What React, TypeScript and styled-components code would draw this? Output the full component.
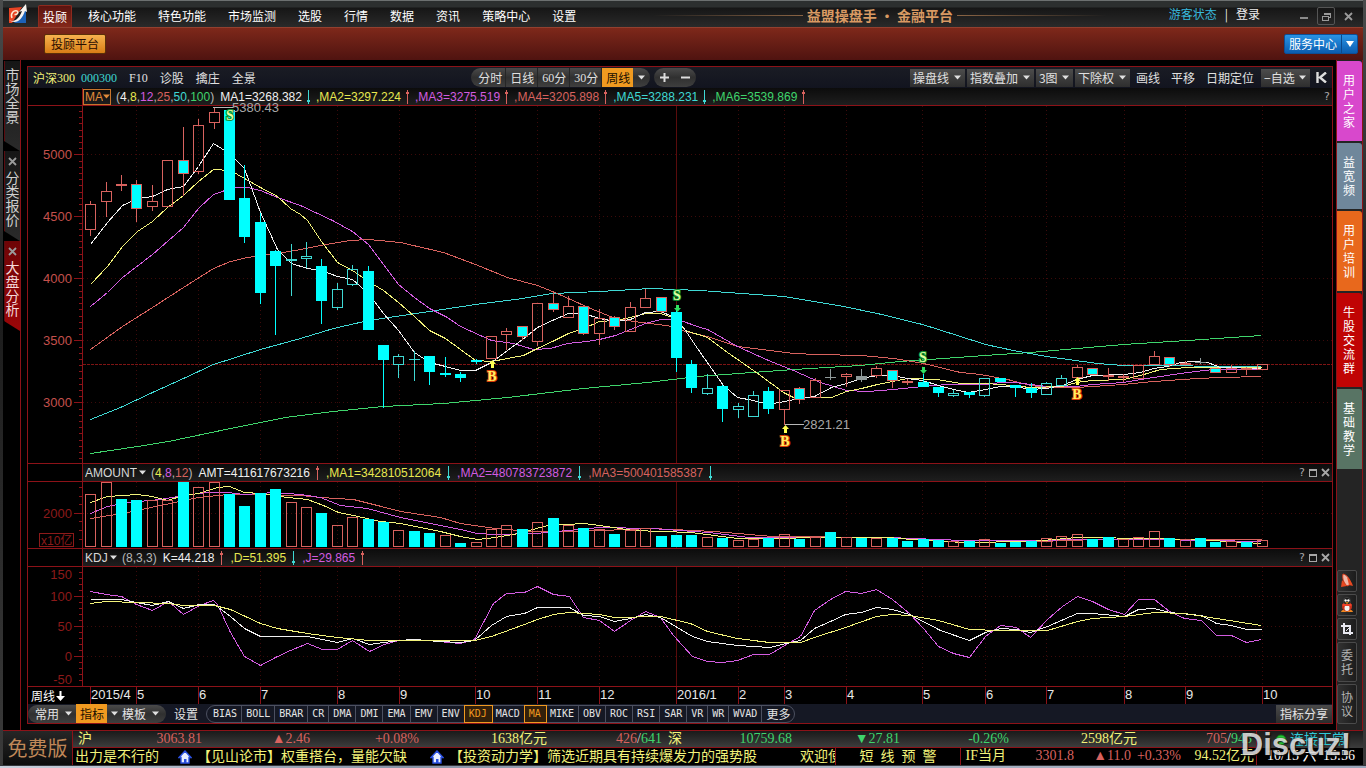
import React from 'react';
import styled, { createGlobalStyle, css } from 'styled-components';

const HAN = '"Noto Sans CJK SC", sans-serif';
const SANS = '"Liberation Sans", "Noto Sans CJK SC", sans-serif';
const SERIF = '"Liberation Serif", "Noto Sans CJK SC", serif';
const MONO = '"DejaVu Sans Mono", "Noto Sans CJK SC", monospace';

const c = {
  line: '#8c1218',
  dimLine: '#5a0c10',
  white: '#f0f0f0',
  text: '#d8d8d8',
  yellow: '#f2f27a',
  readout: '#e8e850',
  magenta: '#d35ce0',
  red: '#d8625e',
  cyan: '#3fd9d4',
  green: '#3fd46c',
  orange: '#f09a20',
  solid: '#00ffff',
};

const GlobalStyle = createGlobalStyle`
  *, *::before, *::after { box-sizing: border-box; }
  body { margin: 0; background: #000; color: ${c.text}; font: 12px/16px ${HAN}; }
  button, select { margin: 0; padding: 0; border: 0; background: none; color: inherit; font: inherit; cursor: pointer; }
  a { color: inherit; text-decoration: none; }
  svg { display: block; flex: none; }
`;

/* ---------- frame ---------- */

const Frame = styled.div`
  min-height: 100vh;
  display: flex;
  flex-direction: column;
  border: solid #4a4c4c;
  border-width: 0 3px;
  border-image: linear-gradient(#4a4c4c, #1c1c1c 40%, #3a3a3a) 1;
  background: #000;
`;

const TitleBar = styled.header`
  height: 27px;
  display: flex;
  align-items: flex-end;
  padding: 0 6px 0 5px;
  border-top: 1px solid #6c7070;
  background: linear-gradient(#2c2f2f 0 6px, #161616 7px, #2a2a2a);
`;

const Logo = styled.svg`
  align-self: center;
  margin-right: 10px;
`;

const Nav = styled.nav`
  display: flex;
  gap: 22px;
  line-height: 22px;
  color: #fff;
`;

const NavLink = styled.a<{ $active?: boolean }>`
  ${p => p.$active && css`
    padding: 0 4px;
    margin-right: -6px;
    border: solid #8e2a1e;
    border-width: 1px 1px 0;
    border-radius: 2px 2px 0 0;
    line-height: 21px;
    background: linear-gradient(#5a1410, #84281a);
  `}
`;

const Brand = styled.div`
  flex: 1;
  min-width: 0;
  display: flex;
  align-items: center;
  justify-content: center;
  gap: 4px;
  height: 24px;
  padding-left: 15px;
  font-weight: 700;
  font-size: 14px;
  color: #d99a63;
  white-space: nowrap;
`;

const BrandLine = styled.span<{ $flip?: boolean }>`
  width: 150px;
  height: 1px;
  background: linear-gradient(to ${p => (p.$flip ? 'left' : 'right')}, transparent, #8a6444);
`;

const Account = styled.div`
  display: flex;
  align-items: center;
  gap: 8px;
  align-self: center;
  padding-right: 35px;
  color: #eee;
`;

const GuestLink = styled.a`
  color: #38b8dc;
`;

const WindowButtons = styled.div`
  display: flex;
  gap: 4px;
  align-self: center;
  margin-top: 4px;
`;

const WindowButton = styled.button<{ $boxed?: boolean }>`
  width: 18px;
  height: 18px;
  display: grid;
  place-items: center;
  border: 1px solid ${p => (p.$boxed ? '#555' : 'transparent')};
  border-radius: 2px;
`;

const Ribbon = styled.div`
  height: 33px;
  display: flex;
  justify-content: space-between;
  align-items: flex-start;
  padding: 6px 5px 0 41px;
  border-top: 1px solid #93402f;
  background: linear-gradient(#7e281a, #4f1310);
`;

const RibbonButton = styled.button`
  height: 20px;
  padding: 0 6px;
  border: 1px solid #5c3008;
  border-radius: 2px;
  line-height: 18px;
  color: #2a0d00;
  background: linear-gradient(#f6b24e, #d97e16);
`;

const ServiceButton = styled.button`
  height: 20px;
  display: flex;
  align-items: center;
  border: 1px solid #0d4f96;
  border-radius: 2px;
  padding-left: 4px;
  color: #fff;
  background: linear-gradient(#2a93e4, #0a5db0);
`;

const ServiceArrow = styled.span`
  display: grid;
  place-items: center;
  width: 16px;
  height: 18px;
  margin-left: 4px;
  border-left: 1px solid #0c4a8c;
`;

const Body = styled.div`
  flex: 1;
  display: flex;
  align-items: stretch;
`;

/* ---------- left tabs ---------- */

const LeftRail = styled.nav`
  width: 18px;
  flex: none;
  padding-top: 1px;
  border-right: 1px solid ${c.line};
  border-left: 1px solid #000;
`;

const LeftTab = styled.div<{ $active?: boolean }>`
  height: 90px;
  display: flex;
  flex-direction: column;
  align-items: center;
  padding-top: 6px;
  clip-path: polygon(0 0, 100% 0, 100% 100%, 0 80px);
  border-left: 1px solid ${c.dimLine};
  background: ${p => (p.$active ? 'linear-gradient(#6e0406, #9c0608)' : 'linear-gradient(#161616, #2a2a2a)')};
  color: ${p => (p.$active ? '#f4dada' : '#d0d0d0')};
`;

const LeftTabLink = styled.a`
  width: 14px;
  font-size: 14px;
  line-height: 14px;
  word-break: break-all;
`;

const CloseButton = styled.button`
  display: flex;
  height: 13px;
`;

/* ---------- right rail ---------- */

const RightRail = styled.aside`
  width: 27px;
  flex: none;
  margin-left: 3px;
  padding: 1px 0 6px;
  display: flex;
  flex-direction: column;
  gap: 2px;
  border: solid ${c.line};
  border-width: 0 1px;
  background: #242424;
`;

const RightTab = styled.a<{ $color: string }>`
  padding: 12px 7px 12px 6px;
  line-height: 14px;
  word-break: break-all;
  border-radius: 0 3px 0 0;
  color: #fff;
  background: ${p => p.$color};
`;

const RailTools = styled.div`
  margin-top: auto;
  display: flex;
  flex-direction: column;
  gap: 2px;
  padding-right: 5px;
`;

const RailTool = styled.button<{ $text?: boolean }>`
  min-height: 22px;
  padding: ${p => (p.$text ? '5px 3px' : '2px')};
  line-height: 14px;
  word-break: break-all;
  color: #b4b4b4;
  border: 1px solid #4a4a4a;
  border-radius: 2px;
  background: linear-gradient(to right, #323232, #1c1c1c);
`;

/* ---------- main panel ---------- */

const Panel = styled.main`
  flex: 1;
  min-width: 0;
  margin: 6px 0 6px 6px;
  border: 1px solid ${c.line};
`;

const TopBar = styled.div`
  height: 21px;
  display: flex;
  align-items: center;
  padding: 0 0 0 5px;
  background: linear-gradient(#1a1c24, #12141f);
  color: #e0e0e0;
`;

const StockLinks = styled.div`
  display: flex;
  gap: 12px;
  flex: 437 1 0;
`;

const StockName = styled.a<{ $color?: string; $tight?: boolean }>`
  display: inline-flex;
  align-items: center;
  color: ${p => p.$color || 'inherit'};
  margin-right: ${p => (p.$tight ? '-6px' : '0')};
`;

const Code = styled.span`
  font: 12px/16px ${SERIF};
`;

const Pill = styled.div`
  display: flex;
  align-items: center;
  height: 19px;
  padding: 0 3px;
  border-radius: 10px;
  background: linear-gradient(#4a4a4a, #303030 50%, #3e3e3e);
`;

const PillButton = styled.button<{ $active?: boolean }>`
  height: 19px;
  padding: 0 3px 0 4px;
  display: flex;
  align-items: center;
  border-right: ${p => (p.$active ? '0' : '1px solid #262626')};
  ${p => p.$active && css`
    color: #201000;
    background: ${c.orange};
  `}
`;

const ArrowButton = styled.button`
  height: 19px;
  padding: 0 2px 0 5px;
`;

const ZoomPill = styled(Pill)`
  gap: 12px;
  margin-left: 4px;
  padding: 0 6px;
`;

const ToolGroup = styled.div`
  flex: 634 1 0;
  display: flex;
  justify-content: flex-end;
  align-items: center;
  gap: 2px;
`;

const DropLabel = styled.label<{ $kind: 'box' | 'plain' | 'outline' | 'pill' }>`
  display: inline-flex;
  align-items: center;
  ${p => p.$kind === 'box' && css`
    height: 18px;
    gap: 4px;
    padding: 0 4px 0 3px;
    background: linear-gradient(#4c4c4c, #2e2e2e);
  `}
  ${p => p.$kind === 'outline' && css`
    height: 16px;
    padding-left: 1px;
    border: 1px solid #c8742c;
    color: #e08a3a;
  `}
  ${p => p.$kind === 'plain' && css`
    gap: 2px;
    margin-left: 2px;
  `}
  ${p => p.$kind === 'pill' && css`
    gap: 5px;
  `}
`;

const DropSelect = styled.select`
  appearance: none;
  outline: 0;
  line-height: 16px;
`;

const TextButton = styled.button`
  padding: 0 4px;
  margin-right: 1px;
`;

const HeadRow = styled.div<{ $top?: boolean }>`
  display: grid;
  grid-template-columns: minmax(0, 54fr) minmax(0, 1250fr);
  border-bottom: 1px solid ${c.line};
  border-top: ${p => (p.$top ? `1px solid ${c.line}` : '0')};
`;

const Head = styled.div`
  grid-column: 2;
  height: 17px;
  display: flex;
  align-items: center;
  padding-right: 2px;
  border-left: 1px solid ${c.line};
  font-family: ${SANS};
  white-space: pre;
  background: linear-gradient(#0c0c0c, #1e1e1e);
`;

const Params = styled.span`
  margin: 0 6px 0 5px;
  color: #b8b8b8;
`;

const Reading = styled.span<{ $color: string; $wide?: boolean }>`
  display: inline-flex;
  align-items: center;
  gap: ${p => (p.$wide ? '6px' : '5px')};
  margin-right: ${p => (p.$wide ? '7px' : '6px')};
  color: ${p => p.$color};
`;

const Tint = styled.span<{ $color: string }>`
  color: ${p => p.$color};
`;

const HeadButtons = styled.div`
  margin-left: auto;
  display: flex;
  align-items: center;
  gap: 4px;
  color: #a8a8a8;
  font: 11px/16px ${MONO};
`;

const Chart = styled.svg`
  width: 100%;
  height: auto;
  overflow: visible;
  font-family: "Liberation Sans", sans-serif;
  font-size: 13px;
`;

const UnitText = styled.text`
  font: 12px ${SANS};
`;

const DateRow = styled.div`
  display: grid;
  grid-template-columns: minmax(0, 54fr) minmax(0, 1250fr);
  border-top: 1px solid ${c.line};
`;

const CycleButton = styled.button`
  display: flex;
  align-items: center;
  gap: 1px;
  padding-left: 3px;
  line-height: 17px;
  color: #fff;
`;

const IndicatorBar = styled.div`
  height: 19px;
  display: flex;
  align-items: center;
  color: #e4e4e4;
  background: #151824;
`;

const IndicatorPill = styled(Pill)`
  height: 18px;
  padding: 0 7px;
  gap: 4px;
`;

const SettingsButton = styled.button`
  padding: 0 8px;
`;

const IndicatorList = styled.div`
  display: flex;
  height: 18px;
  padding-left: 2px;
  border: 1px solid #4c5060;
  border-radius: 10px;
`;

const IndicatorButton = styled.button<{ $on?: boolean; $last?: boolean }>`
  padding: 0 4px;
  font: 10px/16px ${MONO};
  border-right: ${p => (p.$last ? '0' : '1px solid #4c5060')};
  ${p => p.$last && css`
    font: 12px/16px ${HAN};
  `}
  ${p => p.$on && css`
    color: ${c.orange};
    border-right-color: transparent;
    outline: 1px solid ${c.orange};
    background: #33200a;
  `}
`;

const ShareButton = styled.button`
  margin-left: auto;
  height: 18px;
  padding: 0 4px;
  line-height: 18px;
  background: linear-gradient(#4a4a4a, #2c2c2c);
`;

/* ---------- status bar ---------- */

const StatusBar = styled.footer`
  position: relative;
  display: grid;
  grid-template-columns: 70px minmax(0, 1fr) 107px;
  height: 35px;
  border-top: 1px solid ${c.line};
  font: 14px/16px ${SERIF};
  white-space: nowrap;
`;

const Edition = styled.div`
  display: grid;
  place-items: center;
  border-right: 1px solid ${c.line};
  font: 20px/30px ${HAN};
  color: #c08858;
  background: linear-gradient(#262626, #0c0c0c);
`;

const StatusRow = styled.div<{ $upper?: boolean }>`
  display: flex;
  height: 17px;
  ${p => p.$upper && css`
    gap: 5px;
    padding: 0 4px;
    border-bottom: 1px solid ${c.line};
    background: linear-gradient(#1a1a1a, #3c3c3c);
  `}
`;

const Quote = styled.div`
  flex: 1;
  min-width: 0;
  display: grid;
  grid-template-columns: 15fr 110fr 108fr 109fr 128fr 115fr;
  text-align: right;
`;

const Ticker = styled.div`
  flex: 1;
  min-width: 0;
  overflow: hidden;
  display: flex;
  align-items: center;
  margin-left: 2px;
  color: ${c.yellow};
`;

const News = styled.a<{ $first?: boolean }>`
  flex: none;
  margin: ${p => (p.$first ? '0 19px 0 0' : '0 23px 0 5px')};
`;

const Greeting = styled.span`
  flex: none;
  margin-left: 20px;
`;

const AlertButton = styled.button`
  width: 126px;
  border: solid ${c.line};
  border-width: 0 1px;
  color: ${c.yellow};
  white-space: pre;
`;

const Futures = styled.div`
  width: 295px;
  display: grid;
  grid-template-columns: 41fr 68fr 57fr 50fr 73fr;
  text-align: right;
  padding: 0 2px 0 4px;
`;

const StatusSide = styled.div`
  border-left: 1px solid ${c.line};
  color: #fff;
`;

const Connection = styled.div`
  height: 17px;
  display: flex;
  align-items: center;
  justify-content: flex-end;
  gap: 3px;
  padding-right: 17px;
  color: #30c8d8;
  background: linear-gradient(#1a1a1a, #3c3c3c);
`;

const Clock = styled.div`
  display: flex;
  justify-content: space-between;
  padding: 0 8px 0 10px;
`;

const Mark = styled.div`
  position: absolute;
  right: 12px;
  top: 0;
  font: 700 31px/28px ${SANS};
  color: #d8d8d8;
  text-shadow: 0 0 2px #222, 1px 1px 1px #000;
  opacity: 0.9;
`;

const Edge = styled.div`
  height: 3px;
  margin: 0 -3px;
  border-top: 1px solid #33363a;
  background: linear-gradient(to right, #c8d0dc, #8894a8 30%, #aab4c4 60%, #98a4b8);
`;

/* ---------- small drawings ---------- */

const Caret = ({ color = '#e0e0e0' }: { color?: string }) => (
  <svg width="7" height="5" viewBox="0 0 7 5" aria-hidden="true">
    <path d="M0 0.5H7L3.5 4.5Z" fill={color} />
  </svg>
);

const Trend = ({ up }: { up?: boolean }) => (
  <svg width="3" height="14" viewBox="0 0 3 14" shapeRendering="crispEdges" aria-hidden="true">
    {up
      ? <path d="M1 0H2V14H1ZM0 2H3V4H0Z" fill={c.red} />
      : <path d="M1 0H2V14H1ZM0 10H3V12H0Z" fill={c.cyan} />}
  </svg>
);

const Cross = ({ size = 9, color = '#9a9a9a' }: { size?: number; color?: string }) => (
  <svg width={size} height={size} viewBox="0 0 9 9" aria-hidden="true">
    <path d="M1 1L8 8M8 1L1 8" stroke={color} strokeWidth="1.8" fill="none" />
  </svg>
);

const House = () => (
  <svg width="14" height="14" viewBox="0 0 14 14" aria-hidden="true">
    <path d="M7 1L1 7.5H3V13H11V7.5H13Z" fill="#e8eeff" stroke="#2a50e0" strokeWidth="1.4" />
    <path d="M6 9H8.5V13H6Z" fill="#2a50e0" />
  </svg>
);

type DropProps = { name: string; value: string; kind: 'box' | 'plain' | 'outline' | 'pill'; caret?: string };

const Drop = ({ name, value, kind, caret }: DropProps) => (
  <DropLabel $kind={kind}>
    <DropSelect aria-label={name} defaultValue={value}>
      <option>{value}</option>
    </DropSelect>
    <Caret color={caret} />
  </DropLabel>
);

const PaneButtons = ({ full }: { full?: boolean }) => (
  <HeadButtons>
    <button aria-label="帮助">?</button>
    {full && (
      <>
        <button aria-label="最大化">
          <svg width="8" height="8" viewBox="0 0 8 8" shapeRendering="crispEdges">
            <path d="M0.5 1V7.5H7.5V1Z" fill="none" stroke="#a8a8a8" />
            <path d="M0 0H8V2H0Z" fill="#a8a8a8" />
          </svg>
        </button>
        <button aria-label="关闭"><Cross color="#a8a8a8" /></button>
      </>
    )}
  </HeadButtons>
);

/* ---------- chart data ---------- */

const slot = (i: number) => Math.round(90.2 + 15.415 * i);

// kind, body top, body bottom, high, low
// r hollow rising, c filled falling, h hollow falling, m framed falling, g flat
type Candle = [string, number, number, number, number];
const candles: Candle[] = [
  ['r', 204, 230, 201, 236], ['r', 191, 202, 182, 217], ['r', 184, 186, 175, 191], ['m', 184, 209, 180, 222],
  ['r', 201, 207, 185, 211], ['r', 160, 207, 160, 207], ['m', 160, 174, 127, 196], ['r', 125, 172, 119, 174],
  ['r', 112, 123, 107, 129], ['c', 110, 200, 110, 200], ['c', 198, 237, 165, 243], ['c', 222, 293, 213, 304],
  ['c', 251, 266, 250, 335], ['h', 259, 261, 244, 296], ['h', 256, 259, 242, 268], ['c', 266, 301, 259, 324],
  ['h', 289, 308, 283, 310], ['h', 269, 285, 265, 286], ['c', 271, 330, 266, 330], ['c', 345, 360, 345, 408],
  ['h', 356, 365, 354, 378], ['h', 359, 360, 351, 381], ['c', 356, 372, 356, 385], ['c', 373, 375, 357, 377],
  ['c', 374, 378, 372, 382], ['c', 360, 362, 359, 364], ['r', 336, 359, 336, 359], ['r', 331, 335, 328, 350],
  ['m', 326, 337, 326, 340], ['r', 303, 342, 303, 346], ['m', 303, 310, 291, 312], ['r', 306, 318, 296, 318],
  ['m', 306, 334, 305, 335], ['r', 318, 334, 309, 345], ['m', 317, 327, 316, 330], ['r', 307, 332, 302, 332],
  ['r', 298, 308, 289, 308], ['m', 297, 312, 297, 313], ['c', 312, 358, 310, 372], ['c', 364, 388, 360, 393],
  ['h', 388, 394, 374, 395], ['c', 386, 409, 385, 422], ['h', 406, 410, 403, 418], ['h', 395, 417, 391, 417],
  ['c', 391, 409, 387, 414], ['r', 390, 410, 390, 425], ['m', 388, 400, 387, 404], ['r', 380, 398, 378, 398],
  ['g', 377, 378, 369, 380], ['r', 374, 377, 373, 387], ['g', 376, 380, 369, 382], ['r', 368, 376, 366, 378],
  ['m', 370, 381, 370, 388], ['r', 381, 383, 379, 385], ['c', 382, 387, 374, 387], ['c', 387, 393, 387, 397],
  ['h', 393, 396, 390, 397], ['c', 392, 395, 392, 398], ['h', 378, 396, 378, 397], ['c', 378, 382, 378, 382],
  ['c', 385, 388, 385, 397], ['c', 388, 393, 383, 398], ['h', 383, 395, 382, 395], ['h', 378, 386, 375, 386],
  ['r', 367, 378, 365, 378], ['m', 368, 375, 368, 375], ['r', 375, 377, 368, 381], ['r', 376, 378, 374, 382],
  ['r', 365, 379, 365, 379], ['r', 356, 365, 351, 365], ['m', 357, 365, 357, 367], ['r', 363, 365, 361, 365],
  ['g', 362, 363, 358, 364], ['m', 368, 373, 368, 373], ['r', 368, 373, 365, 373], ['r', 368, 370, 367, 375],
  ['r', 364, 370, 364, 370],
];

const volumes: [string, number][] = [
  ['r', 494], ['r', 482], ['c', 499], ['c', 500], ['r', 500], ['r', 500], ['c', 482], ['r', 487], ['r', 482], ['c', 494],
  ['c', 506], ['c', 493], ['c', 489], ['r', 502], ['r', 507], ['c', 513], ['r', 525], ['r', 517], ['c', 519], ['c', 522],
  ['r', 530], ['c', 531], ['c', 533], ['r', 535], ['c', 543], ['r', 542], ['r', 529], ['r', 525], ['c', 529], ['r', 522],
  ['c', 518], ['r', 525], ['c', 528], ['r', 529], ['c', 534], ['r', 530], ['r', 528], ['c', 536], ['c', 535], ['c', 535],
  ['r', 537], ['c', 538], ['r', 540], ['r', 539], ['c', 538], ['r', 534], ['c', 539], ['r', 537], ['c', 532], ['r', 537],
  ['c', 538], ['r', 538], ['c', 538], ['c', 541], ['c', 539], ['c', 540], ['r', 541], ['c', 541], ['r', 539], ['c', 543],
  ['c', 542], ['c', 541], ['r', 538], ['r', 536], ['r', 534], ['c', 539], ['c', 537], ['r', 539], ['r', 537], ['r', 531],
  ['c', 538], ['r', 539], ['c', 538], ['c', 542], ['r', 541], ['c', 542], ['r', 540],
];

const priceLines: [string, string][] = [
  [c.green, '90,453 137,446 168,441 230,428 285,417 300,415 333,411 383,406 443,403 507,397 583,388 647,382 697,376 793,369 860,365 900,361 943,358 999,354 1030,352 1123,344 1187,340 1261,335'],
  [c.cyan, '90,419 120,407 152,392 183,378 213,364 260,349 300,338 333,328 368,320 429,311 475,304 522,298 552,293 599,291 633,289 650,288 700,290 783,296 843,306 877,313 922,324 957,335 985,344 1013,350 1046,356 1097,363 1123,365 1261,366'],
  [c.red, '90,349 122,326 152,307 183,287 213,268 230,261 247,257 277,253 300,249 325,244 350,240 368,239 400,242 443,252 475,264 507,277 537,285 552,291 568,298 590,308 615,318 633,321 650,323 672,326 685,331 707,336 737,346 793,353 817,354 861,355 893,358 923,363 960,372 980,374 1007,379 1030,385 1046,387 1076,387 1123,384 1153,381 1197,378 1220,377 1261,376'],
  [c.magenta, '90,306 107,292 122,277 152,254 183,227 198,208 213,194 233,187 247,187 260,190 277,197 300,205 332,220 352,231 368,244 383,264 398,284 414,297 429,308 447,317 460,326 491,340 513,343 533,349 550,348 567,343 587,341 599,339 615,335 630,329 645,323 660,319 677,319 700,327 707,329 737,346 768,360 793,370 820,382 846,390 867,391 893,389 922,386 947,384 985,384 1000,382 1015,382 1030,384 1046,386 1076,386 1092,384 1123,382 1153,377 1187,372 1213,369 1261,369'],
  [c.yellow, '90,284 107,266 122,246 137,231 152,221 167,207 183,195 198,181 213,169 230,170 244,178 260,187 277,196 290,208 300,214 307,220 321,241 337,262 352,270 368,281 383,290 398,302 414,316 429,330 445,338 460,349 475,360 491,361 507,358 523,355 537,348 552,341 568,333 583,328 599,321 615,320 630,317 645,313 660,313 672,317 685,330 707,337 727,352 743,363 760,375 783,392 793,397 814,397 831,397 846,391 861,388 877,384 892,381 907,378 937,379 960,383 985,383 1000,384 1030,387 1062,386 1076,382 1092,380 1123,379 1140,375 1160,369 1187,367 1261,367'],
  [c.white, '90,244 107,222 122,205 137,198 152,196 167,189 183,186 198,166 213,143 229,153 244,168 260,212 277,249 291,263 307,268 321,270 337,276 352,279 368,293 383,313 398,330 414,352 429,362 445,366 460,370 475,370 491,362 507,350 522,339 537,327 552,320 568,313 583,313 599,318 615,321 630,319 645,312 660,311 672,316 683,327 697,348 723,385 737,397 753,400 768,404 784,401 800,398 814,396 831,387 846,383 861,378 877,375 892,375 907,378 922,380 938,385 953,389 968,392 985,389 1000,386 1015,386 1030,389 1046,388 1062,385 1076,379 1092,375 1123,374 1140,372 1153,368 1167,366 1180,362 1193,361 1207,362 1220,367 1261,368'],
];

const volumeLines: [string, string][] = [
  [c.red, '90,518 122,513 160,505 198,497 227,494 260,494 300,495 320,497 353,499 377,505 400,511 440,517 460,523 495,528 529,531 576,531 651,528 714,531 772,536 888,537 963,540 1038,541 1096,539 1261,539'],
  [c.magenta, '90,513 107,506 127,502 160,499 183,495 207,492 227,492 244,494 260,493 273,492 300,494 320,497 340,505 367,508 400,517 440,525 460,529 477,533 495,534 535,533 599,527 651,528 708,532 749,537 888,537 963,540 1038,540 1077,539 1153,539 1261,541'],
  [c.yellow, '90,502 107,496 137,494 152,496 167,500 183,495 198,493 217,487 229,486 244,492 260,493 287,497 307,499 323,505 338,512 353,515 380,521 400,523 440,531 460,536 477,539 495,537 518,533 547,525 584,523 599,525 633,530 691,532 737,538 768,538 824,537 888,537 911,539 963,542 1030,541 1077,537 1153,538 1211,540 1261,543'],
];

const kdjLines: [string, string][] = [
  [c.magenta, '90,591 106,594 121,596 136,604 152,610 168,601 183,614 199,605 213,600 217,604 230,632 244,656 260,665 275,657 290,650 307,643 322,649 337,649 352,640 369,651 384,644 398,640 414,639 438,641 460,643 474,639 484,620 493,603 506,593 524,592 537,586 553,594 569,596 583,617 599,620 614,631 630,620 645,611 660,617 673,635 692,656 707,661 722,662 737,660 753,654 769,654 786,644 800,636 814,610 830,599 845,591 861,593 876,589 892,599 909,613 923,628 938,646 953,653 969,657 985,636 1000,625 1016,627 1030,637 1047,619 1062,606 1077,596 1092,601 1108,609 1124,614 1138,599 1154,599 1169,611 1184,618 1201,620 1216,635 1231,635 1246,642 1261,639'],
  [c.white, '90,599 121,599 136,602 152,605 168,601 183,608 199,604 214,604 230,616 244,628 260,636 307,636 322,639 337,642 352,638 369,644 398,640 414,639 438,641 460,642 474,640 491,625 506,616 524,613 537,607 569,607 583,615 599,616 614,621 630,618 645,614 660,617 692,636 707,641 737,645 769,647 786,643 800,640 814,628 830,621 845,614 861,612 876,607 892,609 909,614 940,630 969,640 985,632 1000,628 1016,629 1030,632 1047,626 1077,613 1092,613 1124,616 1138,609 1154,608 1169,612 1201,615 1216,623 1231,625 1246,629 1261,629'],
  [c.yellow, '90,603 106,601 168,603 183,605 214,605 230,609 260,623 277,628 307,633 337,637 369,640 438,640 474,640 491,636 524,624 537,619 553,614 569,612 599,614 614,617 660,616 690,623 707,631 737,638 769,642 800,642 814,637 845,627 876,616 892,614 909,615 938,620 969,629 1000,630 1047,630 1077,621 1092,618 1124,616 1154,612 1184,613 1216,618 1261,625'],
];

const months: [number, string][] = [
  [90, '2015/4'], [136, '5'], [198, '6'], [260, '7'], [337, '8'], [399, '9'], [475, '10'], [537, '11'], [599, '12'],
  [676, '2016/1'], [738, '2'], [784, '3'], [846, '4'], [922, '5'], [985, '6'], [1046, '7'], [1124, '8'], [1185, '9'], [1262, '10'],
];

/* ---------- chart parts ---------- */

const Grid = ({ top, bottom, rows }: { top: number; bottom: number; rows: number[] }) => (
  <g stroke="#3c0a0a" strokeDasharray="1 3">
    {rows.map(y => <path key={y} d={`M83 ${y + 0.5}H1332`} />)}
    {months.filter(m => m[0] > 90).map(([x]) => (
      <path key={x} d={`M${x + 0.5} ${top}V${bottom}`} {...(x === 676 ? { stroke: '#5a0c0c', strokeDasharray: 'none' } : {})} />
    ))}
  </g>
);

const Axis = ({ top, bottom, first, step, color, labels }: {
  top: number; bottom: number; first: number; step: number; color: string; labels: [number, string, boolean][];
}) => {
  const ticks: number[] = [];
  for (let y = first; y < bottom - 2; y += step) ticks.push(Math.round(y));
  return (
    <>
      <g stroke={c.line}>
        <path d={`M82.5 ${top}V${bottom}`} />
        {ticks.map(y => <path key={y} d={`M79 ${y + 0.5}H82`} />)}
        {labels.filter(l => l[2]).map(([y]) => <path key={y} d={`M74 ${y + 0.5}H82`} />)}
      </g>
      <g fill={color} textAnchor="end">
        {labels.map(([y, t]) => <text key={t} x="72" y={y + 5}>{t}</text>)}
      </g>
    </>
  );
};

const Lines = ({ data }: { data: [string, string][] }) => (
  <g fill="none">
    {data.map(([color, points]) => <polyline key={color} points={points} stroke={color} transform="translate(0.5 0.5)" />)}
  </g>
);

const CandleMark = ({ i, data }: { i: number; data: Candle }) => {
  const [kind, top, bottom, high, low] = data;
  const x = slot(i);
  const stroke = kind === 'c' ? c.solid : kind === 'h' ? c.cyan : kind === 'g' ? '#8f9a9a' : c.red;
  const fill = kind === 'c' || kind === 'm' ? c.solid : kind === 'g' ? '#8f9a9a' : 'none';
  return (
    <g stroke={stroke}>
      <path d={`M${x + 0.5} ${high}V${top}M${x + 0.5} ${bottom}V${low}`} />
      {bottom - top < 2
        ? <path d={`M${x - 5} ${top + 0.5}H${x + 6}`} />
        : <rect x={x - 4.5} y={top + 0.5} width="10" height={bottom - top - 1} fill={fill} />}
    </g>
  );
};

const Signal = ({ x, y, arrow, type }: { x: number; y: number; arrow?: number; type: 'S' | 'B' }) => {
  const sell = type === 'S';
  return (
    <>
      <text
        x={x} y={y + 5} textAnchor="middle" fontFamily="Liberation Serif" fontWeight="700" fontSize="14"
        fill={sell ? '#dfffa0' : '#ffee60'} stroke={sell ? '#109030' : '#d83c08'} strokeWidth="2" paintOrder="stroke"
      >{type}</text>
      {arrow && (sell
        ? <path d={`M${x - 1} ${arrow - 3}H${x + 2}V${arrow}H${x + 4}L${x + 0.5} ${arrow + 4}L${x - 3} ${arrow}H${x - 1}Z`} fill="#30e060" />
        : <path d={`M${x - 1} ${arrow + 4}H${x + 2}V${arrow}H${x + 4}L${x + 0.5} ${arrow - 4}L${x - 3} ${arrow}H${x - 1}Z`} fill="#ffff50" />)}
    </>
  );
};

const PriceChart = () => (
  <Chart viewBox="28 106 1304 357" role="img" aria-label="沪深300 周线">
    <g shapeRendering="crispEdges">
      <Grid top={106} bottom={463} rows={[154, 216, 278, 340, 402]} />
      <path d="M83 364.5H1332" stroke="#7e1414" strokeDasharray="3 1" />
      <Axis
        top={106} bottom={463} first={111} step={6.2} color="#c4504c"
        labels={[[154, '5000', true], [216, '4500', true], [278, '4000', true], [340, '3500', true], [402, '3000', true]]}
      />
      <Lines data={priceLines} />
      {candles.map((d, i) => <CandleMark key={i} i={i} data={d} />)}
      <path d="M213 107.5H233M785 424.5H804" stroke="#b8b8b8" />
    </g>
    <g fill="#a8a8a8">
      <text x="232" y="112">5380.43</text>
      <text x="803" y="429">2821.21</text>
    </g>
    <Signal type="S" x={230} y={115} />
    <Signal type="S" x={677} y={295} arrow={308} />
    <Signal type="S" x={923} y={357} arrow={370} />
    <Signal type="B" x={492} y={376} arrow={364} />
    <Signal type="B" x={785} y={441} arrow={429} />
    <Signal type="B" x={1077} y={394} arrow={381} />
  </Chart>
);

const VolumeChart = () => (
  <Chart viewBox="28 482 1304 66" role="img" aria-label="成交额">
    <g shapeRendering="crispEdges">
      <Grid top={482} bottom={548} rows={[513]} />
      <Axis top={482} bottom={548} first={487} step={8.6} color="#8c1a1a" labels={[[513, '2000', true]]} />
      <Lines data={volumeLines} />
      {volumes.map(([kind, top], i) => kind === 'c'
        ? <rect key={i} x={slot(i) - 5} y={top} width="11" height={547 - top} fill={c.solid} />
        : <rect key={i} x={slot(i) - 4.5} y={top + 0.5} width="10" height={546 - top} fill="none" stroke={c.red} />)}
      <rect x="39.5" y="533.5" width="34" height="13" fill="none" stroke="#8c1a1a" />
    </g>
    <UnitText x="41" y="545" fill="#8c1a1a">x10亿</UnitText>
  </Chart>
);

const KdjChart = () => (
  <Chart viewBox="28 567 1304 119" role="img" aria-label="KDJ">
    <g shapeRendering="crispEdges">
      <Grid top={567} bottom={686} rows={[596, 626, 656]} />
      <Axis
        top={567} bottom={686} first={572} step={6} color="#8c1a1a"
        labels={[[574, '150', false], [596, '100', true], [626, '50', true], [656, '0', true], [679, '-50', false]]}
      />
      <Lines data={kdjLines} />
    </g>
  </Chart>
);

const indicators = ['BIAS', 'BOLL', 'BRAR', 'CR', 'DMA', 'DMI', 'EMA', 'EMV', 'ENV', 'KDJ', 'MACD', 'MA', 'MIKE', 'OBV', 'ROC', 'RSI', 'SAR', 'VR', 'WR', 'WVAD'];
const menu = ['投顾', '核心功能', '特色功能', '市场监测', '选股', '行情', '数据', '资讯', '策略中心', '设置'];
const rightTabs: [string, string][] = [
  ['用户之家', '#d848cc'], ['益宽频', '#6f879b'], ['用户培训', '#e8681c'], ['牛股交流群', '#c00404'], ['基础教学', '#587464'],
];

export default function App() {
  return (
    <Frame>
      <GlobalStyle />
      <TitleBar>
        <Logo width="20" height="20" viewBox="0 0 20 20" aria-label="益盟操盘手">
          <path d="M1 4L14 3L4 19H1Z" fill="#e84424" />
          <path d="M6 19L17 7H18V19Z" fill="#1c62b8" />
          <path d="M1 16C6 19 11 15 14 7L11 8L18 0L19 8L17 7C14 16 8 21 1 16Z" fill="#f8f4f0" />
          <path d="M4 14C2 9 6 6 9 7C11 8.500 9 11 6.500 10.500" fill="none" stroke="#fce8d0" strokeWidth="1.500" />
        </Logo>
        <Nav>
          {menu.map((m, i) => <NavLink href="#" key={m} $active={i === 0}>{m}</NavLink>)}
        </Nav>
        <Brand>
          <BrandLine />
          益盟操盘手&nbsp;·&nbsp;金融平台
          <BrandLine $flip />
        </Brand>
        <Account>
          <GuestLink href="#">游客状态</GuestLink>
          <span>|</span>
          <a href="#">登录</a>
        </Account>
        <WindowButtons>
          <WindowButton aria-label="最小化">
            <svg width="8" height="8" viewBox="0 0 8 8"><path d="M0 5H8V7H0Z" fill="#8a8a8a" /></svg>
          </WindowButton>
          <WindowButton aria-label="还原" $boxed>
            <svg width="9" height="9" viewBox="0 0 9 9" shapeRendering="crispEdges">
              <path d="M2.500 3V1.500H8.500V5.500H7M0.500 4.500H6.500V8.500H0.500ZM3 2H8" fill="none" stroke="#9a9a9a" />
            </svg>
          </WindowButton>
          <WindowButton aria-label="关闭"><Cross /></WindowButton>
        </WindowButtons>
      </TitleBar>

      <Ribbon>
        <RibbonButton>投顾平台</RibbonButton>
        <ServiceButton>
          服务中心
          <ServiceArrow>
            <svg width="8" height="6" viewBox="0 0 8 6"><path d="M0 0H8L4 6Z" fill="#fff" /></svg>
          </ServiceArrow>
        </ServiceButton>
      </Ribbon>

      <Body>
        <LeftRail>
          <LeftTab><LeftTabLink href="#">市场全景</LeftTabLink></LeftTab>
          <LeftTab>
            <CloseButton aria-label="关闭分类报价"><Cross /></CloseButton>
            <LeftTabLink href="#">分类报价</LeftTabLink>
          </LeftTab>
          <LeftTab $active>
            <CloseButton aria-label="关闭大盘分析"><Cross /></CloseButton>
            <LeftTabLink href="#">大盘分析</LeftTabLink>
          </LeftTab>
        </LeftRail>

        <Panel>
          <TopBar>
            <StockLinks>
              <StockName href="#" $color={c.yellow} $tight>沪深<Code>300</Code></StockName>
              <StockName href="#" $color={c.cyan}><Code>000300</Code></StockName>
              <StockName href="#"><Code>F10</Code></StockName>
              <StockName href="#">诊股</StockName>
              <StockName href="#">擒庄</StockName>
              <StockName href="#">全景</StockName>
            </StockLinks>
            <Pill>
              <PillButton>分时</PillButton>
              <PillButton>日线</PillButton>
              <PillButton><Code>60</Code>分</PillButton>
              <PillButton><Code>30</Code>分</PillButton>
              <PillButton $active>周线</PillButton>
              <ArrowButton aria-label="更多周期"><Caret /></ArrowButton>
            </Pill>
            <ZoomPill>
              <button aria-label="放大">
                <svg width="9" height="9" viewBox="0 0 9 9"><path d="M3.500 0H5.500V3.500H9V5.500H5.500V9H3.500V5.500H0V3.500H3.500Z" fill="#ddd" /></svg>
              </button>
              <button aria-label="缩小">
                <svg width="9" height="9" viewBox="0 0 9 9"><path d="M0 3.500H9V5.500H0Z" fill="#ddd" /></svg>
              </button>
            </ZoomPill>
            <ToolGroup>
              <Drop kind="box" name="操盘线" value="操盘线" />
              <Drop kind="box" name="指数叠加" value="指数叠加" />
              <Drop kind="box" name="图数" value="3图" />
              <Drop kind="box" name="除权方式" value="下除权" />
              <TextButton>画线</TextButton>
              <TextButton>平移</TextButton>
              <TextButton>日期定位</TextButton>
              <Drop kind="box" name="自选" value="−自选" />
              <TextButton aria-label="收起">
                <svg width="11" height="11" viewBox="0 0 11 11">
                  <path d="M1.500 0V11M10 0.500L4 5.500L10 10.500" fill="none" stroke="#ddd" strokeWidth="2.400" />
                </svg>
              </TextButton>
            </ToolGroup>
          </TopBar>

          <HeadRow>
            <Head>
              <Drop kind="outline" name="主图指标" value="MA" caret="#e08a3a" />
              <Params>
                (<Tint $color={c.white}>4</Tint>,<Tint $color={c.readout}>8</Tint>,<Tint $color={c.magenta}>12</Tint>,<Tint $color={c.red}>25</Tint>,<Tint $color={c.cyan}>50</Tint>,<Tint $color={c.green}>100</Tint>)
              </Params>
              <Reading $color={c.white}>MA1=3268.382<Trend /></Reading>
              <Reading $color={c.readout}>,MA2=3297.224<Trend up /></Reading>
              <Reading $color={c.magenta}>,MA3=3275.519<Trend up /></Reading>
              <Reading $color={c.red}>,MA4=3205.898<Trend up /></Reading>
              <Reading $color={c.cyan}>,MA5=3288.231<Trend /></Reading>
              <Reading $color={c.green}>,MA6=3539.869<Trend up /></Reading>
              <PaneButtons />
            </Head>
          </HeadRow>
          <PriceChart />

          <HeadRow $top>
            <Head>
              <Drop kind="plain" name="副图指标一" value="AMOUNT" />
              <Params>
                (<Tint $color={c.readout}>4</Tint>,<Tint $color={c.magenta}>8</Tint>,<Tint $color={c.red}>12</Tint>)
              </Params>
              <Reading $wide $color={c.white}>AMT=411617673216<Trend up /></Reading>
              <Reading $wide $color={c.readout}>,MA1=342810512064<Trend /></Reading>
              <Reading $wide $color={c.magenta}>,MA2=480783723872<Trend /></Reading>
              <Reading $wide $color={c.red}>,MA3=500401585387<Trend /></Reading>
              <PaneButtons full />
            </Head>
          </HeadRow>
          <VolumeChart />

          <HeadRow $top>
            <Head>
              <Drop kind="plain" name="副图指标二" value="KDJ" />
              <Params>(8,3,3)</Params>
              <Reading $wide $color={c.white}>K=44.218<Trend up /></Reading>
              <Reading $wide $color={c.readout}>,D=51.395<Trend /></Reading>
              <Reading $wide $color={c.magenta}>,J=29.865<Trend up /></Reading>
              <PaneButtons full />
            </Head>
          </HeadRow>
          <KdjChart />

          <DateRow>
            <CycleButton>
              周线
              <svg width="9" height="10" viewBox="0 0 9 10"><path d="M3.500 0H5.500V5H9L4.500 10L0 5H3.500Z" fill="#fff" /></svg>
            </CycleButton>
            <Chart viewBox="82 687 1250 17" role="img" aria-label="日期">
              <path d={months.map(([x]) => `M${x + 0.5} 687V704`).join('')} stroke={c.line} shapeRendering="crispEdges" />
              <g fill="#e8e8e8">
                {months.map(([x, t]) => <text key={x} x={x + 1} y="699">{t}</text>)}
              </g>
            </Chart>
          </DateRow>

          <IndicatorBar>
            <IndicatorPill>
              <Drop kind="pill" name="常用" value="常用" />
              <PillButton $active>指标</PillButton>
              <button aria-label="指标列表"><Caret /></button>
              <Drop kind="pill" name="模板" value="模板" />
            </IndicatorPill>
            <SettingsButton>设置</SettingsButton>
            <IndicatorList>
              {indicators.map(name => (
                <IndicatorButton key={name} $on={name === 'KDJ' || name === 'MA'}>{name}</IndicatorButton>
              ))}
              <IndicatorButton $last>更多</IndicatorButton>
            </IndicatorList>
            <ShareButton>指标分享</ShareButton>
          </IndicatorBar>
        </Panel>

        <RightRail>
          {rightTabs.map(([t, color]) => <RightTab href="#" key={t} $color={color}>{t}</RightTab>)}
          <RailTools>
            <RailTool aria-label="火箭">
              <svg width="14" height="16" viewBox="0 0 14 16">
                <path d="M3 1C7 2 10 6 11 11L7 13C4 10 2 6 3 1Z" fill="#f0b8a8" stroke="#e03c18" />
                <path d="M7 4C10 6 12 10 13 13L9 12ZM2 7L1 14L7 13Z" fill="#e84820" />
              </svg>
            </RailTool>
            <RailTool aria-label="客服">
              <svg width="14" height="16" viewBox="0 0 14 16">
                <path d="M1 15C2 12 5 13 7 14.500C9 13 12 12 13 15Z" fill="#f08820" />
                <ellipse cx="7" cy="9.500" rx="5" ry="5" fill="#c8321c" />
                <circle cx="7" cy="4" r="3.500" fill="#141414" stroke="#666" strokeWidth="0.500" />
                <ellipse cx="7" cy="11" rx="2.500" ry="3" fill="#f4f4f4" />
                <circle cx="5.600" cy="3.500" r="1.200" fill="#fff" />
                <circle cx="8.400" cy="3.500" r="1.200" fill="#fff" />
                <path d="M2.500 7H11.500V9H2.500Z" fill="#f04028" />
                <path d="M5 5.200H9L7 7Z" fill="#f0a020" />
              </svg>
            </RailTool>
            <RailTool aria-label="截图">
              <svg width="14" height="16" viewBox="0 0 14 16" shapeRendering="crispEdges">
                <path d="M4 2V12H13M1 5H10V14" fill="none" stroke="#e8e8f0" strokeWidth="2" />
                <path d="M6 10L9 7" stroke="#e8e8f0" />
              </svg>
            </RailTool>
            <RailTool $text>委托</RailTool>
            <RailTool $text>协议</RailTool>
          </RailTools>
        </RightRail>
      </Body>

      <StatusBar>
        <Edition>免费版</Edition>
        <div>
          <StatusRow $upper>
            <Quote>
              <Tint $color={c.yellow}>沪</Tint>
              <Tint $color={c.red}>3063.81</Tint>
              <Tint $color={c.red}>▲2.46</Tint>
              <Tint $color={c.red}>+0.08%</Tint>
              <Tint $color={c.yellow}>1638亿元</Tint>
              <span><Tint $color={c.red}>426</Tint>/<Tint $color={c.green}>641</Tint></span>
            </Quote>
            <Quote>
              <Tint $color={c.yellow}>深</Tint>
              <Tint $color={c.green}>10759.68</Tint>
              <Tint $color={c.green}>▼27.81</Tint>
              <Tint $color={c.green}>-0.26%</Tint>
              <Tint $color={c.yellow}>2598亿元</Tint>
              <span><Tint $color={c.red}>705</Tint>/<Tint $color={c.green}>943</Tint></span>
            </Quote>
          </StatusRow>
          <StatusRow>
            <Ticker>
              <News href="#" $first>出力是不行的</News>
              <House />
              <News href="#">【见山论市】权重搭台，量能欠缺</News>
              <House />
              <News href="#">【投资动力学】筛选近期具有持续爆发力的强势股</News>
              <Greeting>欢迎使用</Greeting>
            </Ticker>
            <AlertButton>短  线  预  警</AlertButton>
            <Futures>
              <Tint $color={c.yellow}>IF当月</Tint>
              <Tint $color={c.red}>3301.8</Tint>
              <Tint $color={c.red}>▲11.0</Tint>
              <Tint $color={c.red}>+0.33%</Tint>
              <Tint $color={c.yellow}>94.52亿元</Tint>
            </Futures>
          </StatusRow>
        </div>
        <StatusSide>
          <Connection>
            <svg width="12" height="12" viewBox="0 0 12 12"><circle cx="6" cy="6" r="5" fill="#28d038" stroke="#0a7818" /></svg>
            连接正常
          </Connection>
          <Clock><span>10/15 六</span><span>15:56</span></Clock>
        </StatusSide>
        <Mark>Discuz!</Mark>
      </StatusBar>
      <Edge />
    </Frame>
  );
}
